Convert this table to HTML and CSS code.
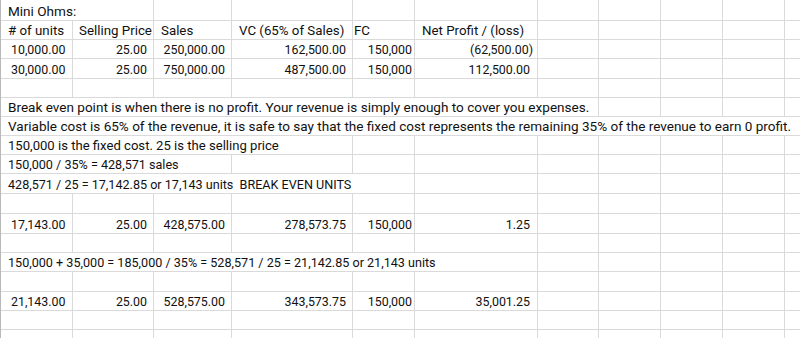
FILE: index.html
```html
<!DOCTYPE html>
<html>
<head>
<meta charset="utf-8">
<title>Mini Ohms</title>
<link rel="stylesheet" href="styles.css">
</head>
<body>
<div class="sheet">
  <!-- R1 -->
  <div class="c l t s2">Mini Ohms:</div>
  <div class="c"></div><div class="c"></div><div class="c"></div><div class="c"></div><div class="c"></div><div class="c"></div><div class="c"></div><div class="c"></div><div class="c k"></div>
  <!-- R2 -->
  <div class="c l h">#&nbsp;of units</div>
  <div class="c lb h">Selling Price</div>
  <div class="c l h">Sales</div>
  <div class="c ld h">VC (65% of Sales)</div>
  <div class="c lfc h">FC</div>
  <div class="c l h">Net Profit / (loss)</div>
  <div class="c"></div><div class="c"></div><div class="c"></div><div class="c"></div><div class="c k"></div>
  <!-- R3 -->
  <div class="c a n">10,000.00</div>
  <div class="c r n">25.00</div>
  <div class="c r n">250,000.00</div>
  <div class="c r n">162,500.00</div>
  <div class="c e n">150,000</div>
  <div class="c neg n">(62,500.00)</div>
  <div class="c"></div><div class="c"></div><div class="c"></div><div class="c"></div><div class="c k"></div>
  <!-- R4 -->
  <div class="c a n">30,000.00</div>
  <div class="c r n">25.00</div>
  <div class="c r n">750,000.00</div>
  <div class="c r n">487,500.00</div>
  <div class="c e n">150,000</div>
  <div class="c rf n">112,500.00</div>
  <div class="c"></div><div class="c"></div><div class="c"></div><div class="c"></div><div class="c k"></div>
  <!-- R5 -->
  <div class="c"></div><div class="c"></div><div class="c"></div><div class="c"></div><div class="c"></div><div class="c"></div><div class="c"></div><div class="c"></div><div class="c"></div><div class="c"></div><div class="c k"></div>
  <!-- R6 -->
  <div class="c l t s7">Break even point is when there is no profit. Your revenue is simply enough to cover you expenses.</div>
  <div class="c"></div><div class="c"></div><div class="c"></div><div class="c k"></div>
  <!-- R7 -->
  <div class="c l t s11 k">Variable cost is 65% of the revenue, it is safe to say that the fixed cost represents the remaining 35% of the revenue to earn 0 profit.</div>
  <!-- R8 -->
  <div class="c l t8 s4">150,000 is the fixed cost. 25 is the selling price</div>
  <div class="c"></div><div class="c"></div><div class="c"></div><div class="c"></div><div class="c"></div><div class="c"></div><div class="c k"></div>
  <!-- R9 -->
  <div class="c l m s3">150,000 / 35% = 428,571 sales</div>
  <div class="c"></div><div class="c"></div><div class="c"></div><div class="c"></div><div class="c"></div><div class="c"></div><div class="c"></div><div class="c k"></div>
  <!-- R10 -->
  <div class="c l m s5">428,571 / 25 = 17,142.85 or 17,143 units&nbsp; BREAK EVEN UNITS</div>
  <div class="c"></div><div class="c"></div><div class="c"></div><div class="c"></div><div class="c"></div><div class="c k"></div>
  <!-- R11 -->
  <div class="c"></div><div class="c"></div><div class="c"></div><div class="c"></div><div class="c"></div><div class="c"></div><div class="c"></div><div class="c"></div><div class="c"></div><div class="c"></div><div class="c k"></div>
  <!-- R12 -->
  <div class="c a n">17,143.00</div>
  <div class="c r n">25.00</div>
  <div class="c r n">428,575.00</div>
  <div class="c r n">278,573.75</div>
  <div class="c e n">150,000</div>
  <div class="c rf n">1.25</div>
  <div class="c"></div><div class="c"></div><div class="c"></div><div class="c"></div><div class="c k"></div>
  <!-- R13 -->
  <div class="c"></div><div class="c"></div><div class="c"></div><div class="c"></div><div class="c"></div><div class="c"></div><div class="c"></div><div class="c"></div><div class="c"></div><div class="c"></div><div class="c k"></div>
  <!-- R14 -->
  <div class="c l m s6">150,000 + 35,000 = 185,000 / 35% = 528,571 / 25 = 21,142.85 or 21,143 units</div>
  <div class="c"></div><div class="c"></div><div class="c"></div><div class="c"></div><div class="c k"></div>
  <!-- R15 -->
  <div class="c"></div><div class="c"></div><div class="c"></div><div class="c"></div><div class="c"></div><div class="c"></div><div class="c"></div><div class="c"></div><div class="c"></div><div class="c"></div><div class="c k"></div>
  <!-- R16 -->
  <div class="c a n">21,143.00</div>
  <div class="c r n">25.00</div>
  <div class="c r n">528,575.00</div>
  <div class="c r n">343,573.75</div>
  <div class="c e n">150,000</div>
  <div class="c rf n">35,001.25</div>
  <div class="c"></div><div class="c"></div><div class="c"></div><div class="c"></div><div class="c k"></div>
  <!-- R17 -->
  <div class="c"></div><div class="c"></div><div class="c"></div><div class="c"></div><div class="c"></div><div class="c"></div><div class="c"></div><div class="c"></div><div class="c"></div><div class="c"></div><div class="c k"></div>
  <!-- R18 -->
  <div class="c"></div><div class="c"></div><div class="c"></div><div class="c"></div><div class="c"></div><div class="c"></div><div class="c"></div><div class="c"></div><div class="c"></div><div class="c"></div><div class="c k"></div>
</div>
</body>
</html>
```
FILE: styles.css
```css
html, body {
  margin: 0;
  padding: 0;
  background: #ffffff;
  overflow: hidden;
}

.sheet {
  display: grid;
  grid-template-columns: 72px 81px 78px 121px 62px 123px 61px 62px 62px 62px 15px;
  grid-template-rows: 21px 19px 19px 20px 19px 19px 19px 19px 19px 20px 20px 20px 19px 19px 20px 19px 19px 19px;
  width: 800px;
  height: 338px;
  overflow: hidden;
  box-sizing: border-box;
  border-left: 1px solid #b9b9b9;
  font-family: Roboto, "Liberation Sans", sans-serif;
  color: #111111;
}

.c {
  box-sizing: border-box;
  border-right: 1px solid #dadada;
  border-bottom: 1px solid #dadada;
  display: flex;
  align-items: flex-end;
  padding-bottom: 1px;
  white-space: nowrap;
  overflow: hidden;
  line-height: normal;
  min-width: 0;
}

.k { border-right: none; }

/* spans for overflowing text */
.s2 { grid-column: span 2; }
.s3 { grid-column: span 3; }
.s4 { grid-column: span 4; }
.s5 { grid-column: span 5; }
.s6 { grid-column: span 6; }
.s7 { grid-column: span 7; }
.s11 { grid-column: span 11; }

/* font sizes */
.t { font-size: 13.55px; }
.t8 { font-size: 13.1px; }
.h { font-size: 13.3px; }
.m { font-size: 12.6px; }
.n { font-size: 12.4px; }

/* alignment / padding */
.l { padding-left: 7px; }
.lb { padding-left: 6px; }
.ld { padding-left: 7px; }
.lfc { padding-left: 1px; }
.a { padding-left: 10px; }
.r { justify-content: flex-end; padding-right: 6px; }
.rf { justify-content: flex-end; padding-right: 7px; }
.neg { justify-content: flex-end; padding-right: 4px; }
.e { justify-content: flex-end; padding-right: 2px; }
```
